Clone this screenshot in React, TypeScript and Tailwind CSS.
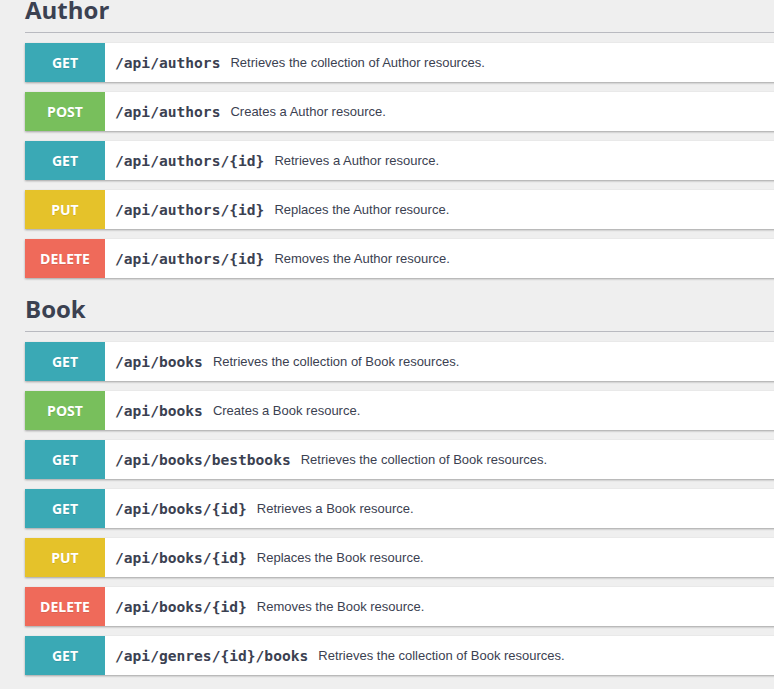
import React from "react";

type Method = "GET" | "POST" | "PUT" | "DELETE";

const methodClass: Record<Method, string> = {
  GET: "bg-[#3aa9b5]",
  POST: "bg-[#78bf5c]",
  PUT: "bg-[#e5c22a]",
  DELETE: "bg-[#ef6a5a]",
};

type Op = { m: Method; path: string; desc: string };

const sections: { title: string; ops: Op[] }[] = [
  {
    title: "Author",
    ops: [
      { m: "GET", path: "/api/authors", desc: "Retrieves the collection of Author resources." },
      { m: "POST", path: "/api/authors", desc: "Creates a Author resource." },
      { m: "GET", path: "/api/authors/{id}", desc: "Retrieves a Author resource." },
      { m: "PUT", path: "/api/authors/{id}", desc: "Replaces the Author resource." },
      { m: "DELETE", path: "/api/authors/{id}", desc: "Removes the Author resource." },
    ],
  },
  {
    title: "Book",
    ops: [
      { m: "GET", path: "/api/books", desc: "Retrieves the collection of Book resources." },
      { m: "POST", path: "/api/books", desc: "Creates a Book resource." },
      { m: "GET", path: "/api/books/bestbooks", desc: "Retrieves the collection of Book resources." },
      { m: "GET", path: "/api/books/{id}", desc: "Retrieves a Book resource." },
      { m: "PUT", path: "/api/books/{id}", desc: "Replaces the Book resource." },
      { m: "DELETE", path: "/api/books/{id}", desc: "Removes the Book resource." },
      { m: "GET", path: "/api/genres/{id}/books", desc: "Retrieves the collection of Book resources." },
    ],
  },
];

function Row({ op }: { op: Op }) {
  return (
    <div className="flex h-[39px] items-center bg-white shadow-[0_1px_2px_rgba(0,0,0,0.32)]">
      <div
        className={`${methodClass[op.m]} flex h-full w-[80px] shrink-0 items-center justify-center text-[14px] font-bold text-white [text-shadow:0_1px_0_rgba(0,0,0,0.1)] [font-family:'Open_Sans',sans-serif]`}
      >
        {op.m}
      </div>
      <span className="ml-[10px] text-[14.6px] font-bold text-[#3b4151] [font-family:'DejaVu_Sans_Mono',monospace]">
        {op.path}
      </span>
      <span className="ml-[10px] text-[13px] text-[#3b4151] [font-family:'Liberation_Sans',Arial,sans-serif]">
        {op.desc}
      </span>
    </div>
  );
}

export default function App() {
  return (
    <div className="h-[689px] w-[774px] overflow-hidden bg-[#efefef]">
      <div className="w-[820px] pl-[25px]">
        {sections.map((s, i) => (
          <div key={s.title} className={i === 0 ? "mt-[-5px]" : "mt-[16px]"}>
            <h4 className="border-b border-[#b9bac0] pb-[7px] text-[24px] font-bold leading-[30px] text-[#3b4151] [font-family:'Open_Sans',sans-serif]">
              {s.title}
            </h4>
            <div className="mt-[10px] flex flex-col gap-[10px]">
              {s.ops.map((op, j) => (
                <Row key={j} op={op} />
              ))}
            </div>
          </div>
        ))}
      </div>
    </div>
  );
}
